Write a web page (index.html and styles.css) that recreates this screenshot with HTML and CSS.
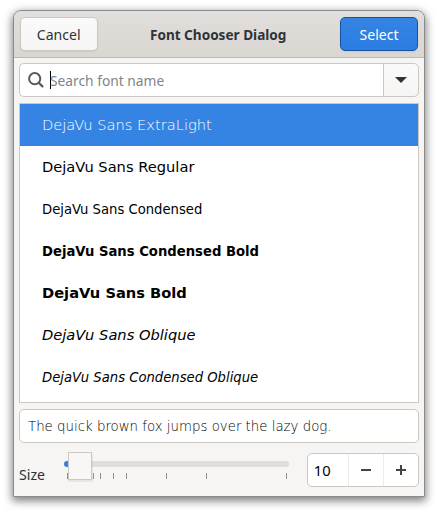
FILE: index.html
```html
<!DOCTYPE html>
<html lang="en">
<head>
<meta charset="utf-8">
<title>Font Chooser Dialog</title>
<link rel="stylesheet" href="styles.css">
</head>
<body>
<main class="dialog">
  <header class="headerbar">
    <button class="button cancel"><span class="label">Cancel</span></button>
    <h1 class="title"><span>Font Chooser Dialog</span></h1>
    <button class="button select"><span class="label">Select</span></button>
  </header>
  <div class="content">
    <div class="search">
      <div class="search-entry">
        <svg class="search-icon" width="16" height="16" viewBox="0 0 16 16"><circle cx="6.7" cy="6.7" r="5.6" fill="none" stroke="#555b5c" stroke-width="2"/><path d="M10.8 10.8 14.4 14.4" stroke="#555b5c" stroke-width="2.2" stroke-linecap="round"/></svg>
        <span class="caret"></span><span class="placeholder">Search font name</span>
      </div>
      <div class="dropdown"><svg width="12" height="6" viewBox="0 0 12 6"><path d="M0 0H12L6 6Z" fill="#2e3436"/></svg></div>
    </div>
    <ul class="fonts">
      <li class="row selected"><span class="extralight">DejaVu Sans ExtraLight</span></li>
      <li class="row"><span class="regular">DejaVu Sans Regular</span></li>
      <li class="row"><span class="condensed">DejaVu Sans Condensed</span></li>
      <li class="row"><span class="condensed bold">DejaVu Sans Condensed Bold</span></li>
      <li class="row"><span class="bold">DejaVu Sans Bold</span></li>
      <li class="row"><span class="oblique">DejaVu Sans Oblique</span></li>
      <li class="row"><span class="condensed oblique">DejaVu Sans Condensed Oblique</span></li>
    </ul>
    <div class="preview"><span class="extralight">The quick brown fox jumps over the lazy dog.</span></div>
    <div class="size">
      <span class="size-label">Size</span>
      <svg class="scale" width="226" height="34" viewBox="0 0 226 34">
        <rect x="0" y="8" width="225" height="6" rx="3" fill="#dfdedc"/>
        <rect x="0" y="8" width="16" height="6" rx="3" fill="#3584e4"/>
        <path d="M3.5 20v6M29.5 20v6M36.5 20v6M49.5 20v6M62.5 20v6M102.5 20v6M142.5 20v6M222.5 20v6" stroke="#8b8e8f"/>
        <rect x="4" y="1" width="25" height="28" fill="#000" opacity=".06"/>
        <rect x="4.500" y="-.5" width="23" height="27" fill="#f8f7f6" stroke="#cdc7c2"/>
      </svg>
      <div class="spin">
        <span class="value">10</span>
        <span class="step"><svg width="10" height="10" viewBox="0 0 10 10"><path d="M0 5H10" stroke="#404648" stroke-width="2"/></svg></span>
        <span class="step"><svg width="10" height="10" viewBox="0 0 10 10"><path d="M0 5H10M5 0V10" stroke="#404648" stroke-width="2"/></svg></span>
      </div>
    </div>
  </div>
</main>
</body>
</html>
```
FILE: styles.css
```css
* { box-sizing: border-box; }
body {
  margin: 0;
  padding: 10px 13px 16px;
  background: #fff;
  color: #2e3436;
  font: 15.2px/20px "Noto Sans", sans-serif;
}
.dialog {
  height: 487px;
  border: 1px solid #8c8b8a;
  border-radius: 8px 8px 0 0;
  background: #f6f5f4;
  box-shadow: 0 3px 9px 1px rgba(0, 0, 0, .5);
  overflow: hidden;
}
.headerbar {
  display: flex;
  align-items: center;
  justify-content: space-between;
  height: 47px;
  padding: 0 6px;
  border-bottom: 1px solid #bfb8b1;
  background: linear-gradient(to top, #dad6d2, #e1dedb);
}
.button {
  width: 78px;
  height: 34px;
  padding: 0;
  border: 1px solid #cdc7c2;
  border-radius: 5px;
  background: linear-gradient(to top, #f6f5f4, #fbfafa);
  color: #2e3436;
  font: inherit;
  box-shadow: 0 1px 2px rgba(0, 0, 0, .07);
}
.label { display: inline-block; transform: scaleX(.925); }
.select {
  border-color: #15539e;
  background: linear-gradient(to top, #2b7de2, #3584e4);
  color: #fff;
}
.title { margin: 0; font-size: 14.67px; font-weight: 700; transform: translateX(-.5px) scaleX(.926); }
.content { padding: 5px; }
.search { display: flex; height: 34px; }
.search-entry {
  display: flex;
  flex: 1;
  align-items: center;
  padding-left: 8px;
  border: 1px solid #cdc7c2;
  border-right: 0;
  border-radius: 5px 0 0 5px;
  background: #fff;
}
.caret { width: 1px; height: 18px; margin-left: 6px; background: #000; }
.placeholder { margin-left: -1px; color: #818586; transform: scaleX(.907); transform-origin: left; }
.dropdown {
  display: flex;
  align-items: center;
  justify-content: center;
  width: 36px;
  border: 1px solid #cdc7c2;
  border-radius: 0 5px 5px 0;
  background: linear-gradient(to top, #f6f5f4, #fbfafa);
}
.fonts {
  height: 300px;
  margin: 6px 0;
  padding: 0;
  border: 1px solid #cdc7c2;
  background: #fff;
  color: #000;
  list-style: none;
  font-family: "DejaVu Sans", sans-serif;
  font-size: 14.67px;
}
.row { display: flex; align-items: center; height: 42px; padding: 0 0 1px 22px; white-space: nowrap; }
.selected { background: #3584e4; color: #fff; }
.extralight { font-family: "DejaVu Sans", sans-serif; font-weight: 200; }
.condensed { font-family: "DejaVu Sans Condensed", "DejaVu Sans", sans-serif; font-stretch: condensed; }
.bold { font-weight: 700; }
.oblique { font-style: oblique; }
.preview {
  display: flex;
  align-items: center;
  height: 34px;
  padding: 2px 0 0 8px;
  border: 1px solid #cdc7c2;
  border-radius: 5px;
  background: #fff;
  color: #000;
  font-size: 13.33px;
}
.size { display: flex; align-items: flex-start; margin-top: 10px; }
.size-label { width: 45px; padding-top: 11px; transform: scaleX(.93); transform-origin: left; }
.scale { overflow: visible; }
.spin {
  display: flex;
  width: 112px;
  height: 34px;
  margin-left: auto;
  border: 1px solid #cdc7c2;
  border-radius: 5px;
  background: #fff;
}
.value { flex: 1; padding: 6px 0 0 6px; color: #000; transform: scaleX(.97); transform-origin: left; }
.step { display: flex; align-items: center; justify-content: center; width: 35px; border-left: 1px solid #eeecea; }
```
